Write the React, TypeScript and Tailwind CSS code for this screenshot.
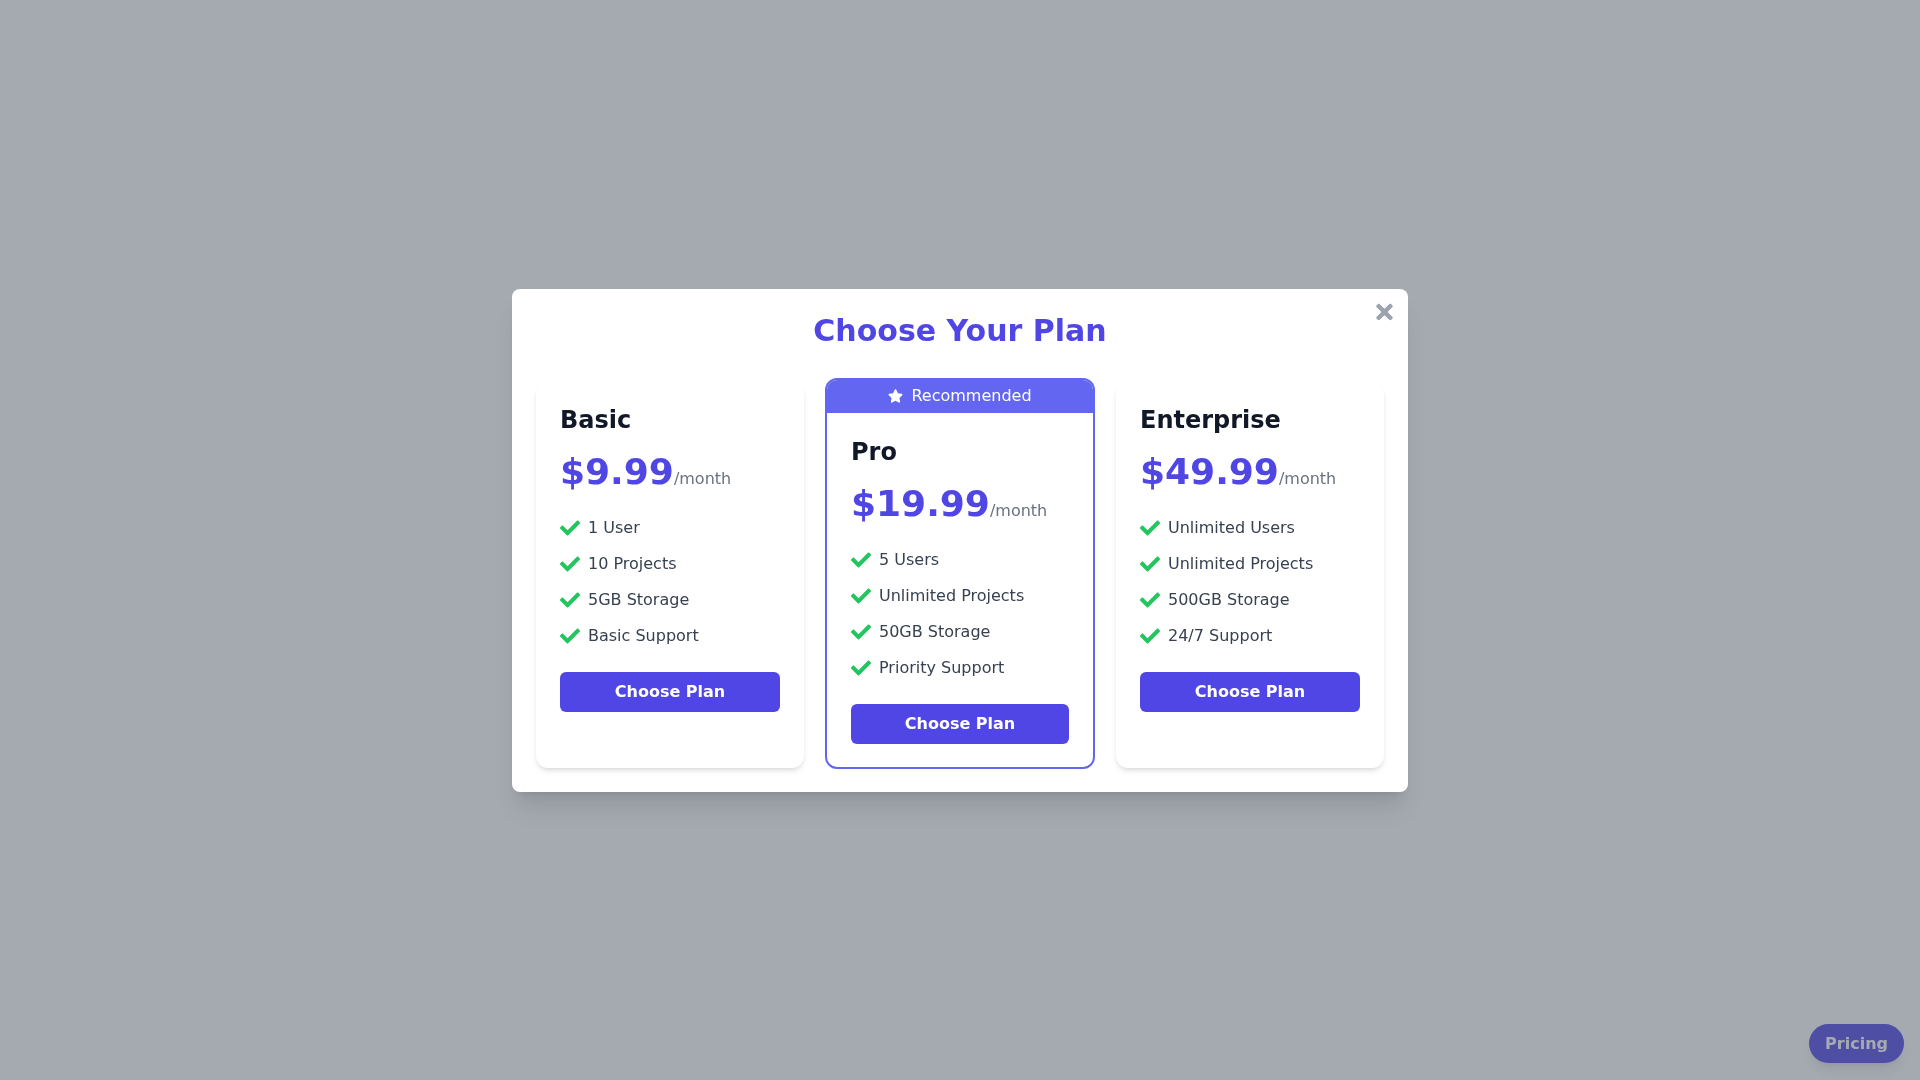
import { FaCheck, FaStar, FaTimes } from 'react-icons/fa';

const plans = [
  {
    name: 'Basic',
    price: '$9.99',
    features: ['1 User', '10 Projects', '5GB Storage', 'Basic Support'],
  },
  {
    name: 'Pro',
    price: '$19.99',
    features: ['5 Users', 'Unlimited Projects', '50GB Storage', 'Priority Support'],
    recommended: true,
  },
  {
    name: 'Enterprise',
    price: '$49.99',
    features: ['Unlimited Users', 'Unlimited Projects', '500GB Storage', '24/7 Support'],
  },
];

type Plan = (typeof plans)[number];

function PlanBody({ plan }: { plan: Plan }) {
  return (
    <>
      <h3 className="text-2xl font-bold text-[#111827] mb-4">{plan.name}</h3>
      <div className="flex items-baseline mb-6">
        <span className="text-4xl font-bold text-[#4f46e5]">{plan.price}</span>
        <span className="text-base text-[#6b7280]">/month</span>
      </div>
      <ul className="space-y-3 mb-6">
        {plan.features.map((f) => (
          <li key={f} className="flex items-center gap-2 text-base text-[#374151]">
            <FaCheck className="w-[20px] h-[20px] text-[#22c55e] shrink-0" />
            <span>{f}</span>
          </li>
        ))}
      </ul>
      <button className="w-full h-10 rounded-md bg-[#4f46e5] text-white font-bold text-base">
        Choose Plan
      </button>
    </>
  );
}

function App() {
  return (
    <div className="relative min-h-screen bg-white font-['DejaVu_Sans',sans-serif]">
      {/* Floating trigger under the overlay */}
      <button className="fixed bottom-[17px] right-4 px-4 h-[39px] rounded-full bg-[#4f46e5] text-white font-bold text-base shadow-lg">
        Pricing
      </button>

      {/* Overlay */}
      <div className="fixed inset-0 bg-[#4b5563]/50 flex items-center justify-center">
        <div className="relative w-[896px] bg-white rounded-lg shadow-xl px-6 pt-6 pb-[23px]">
          <button className="absolute top-[11px] right-[15px] text-[#9ca3af]">
            <FaTimes className="w-[17px] h-6" />
          </button>

          <h2 className="text-3xl font-bold text-[#4f46e5] text-center mb-[29px]">
            Choose Your Plan
          </h2>

          <div className="flex items-start gap-[21px]">
            {plans.map((plan) =>
              plan.recommended ? (
                <div
                  key={plan.name}
                  className="w-[270px] h-[391px] rounded-xl border-2 border-[#6366f1] bg-white overflow-hidden"
                >
                  <div className="h-[34px] -mt-px bg-[#6366f1] text-white flex items-center justify-center gap-2 text-base">
                    <FaStar className="w-[15px] h-[14px]" />
                    <span>Recommended</span>
                  </div>
                  <div className="px-6 pt-[23px]">
                    <PlanBody plan={plan} />
                  </div>
                </div>
              ) : (
                <div
                  key={plan.name}
                  className="w-[268px] h-[385px] mt-[5px] rounded-xl bg-white shadow-md px-6 pt-[21px]"
                >
                  <PlanBody plan={plan} />
                </div>
              )
            )}
          </div>
        </div>
      </div>
    </div>
  );
}

export default App;
